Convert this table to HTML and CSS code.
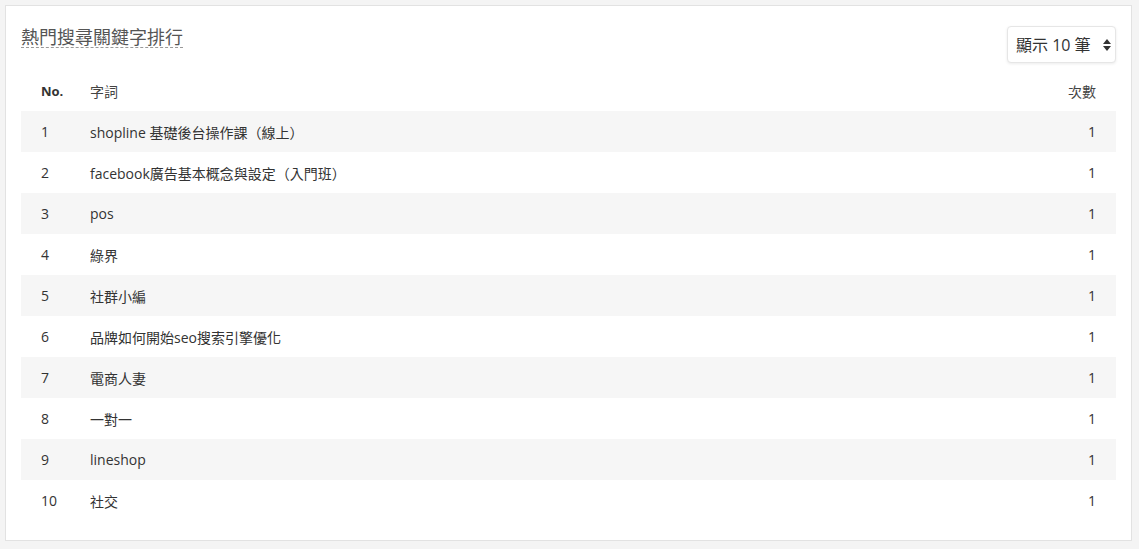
FILE: index.html
```html
<!DOCTYPE html>
<html lang="zh-Hant">
<head>
    <meta charset="UTF-8">
    <title>熱門搜尋關鍵字排行</title>
    <link rel="stylesheet" href="styles.css">
</head>
<body>
<div class="panel">
    <div class="panel-head">
        <h3 class="panel-title">熱門搜尋關鍵字排行</h3>
        <div class="select-wrap">
            <select class="limit-select">
                <option>顯示 10 筆</option>
                <option>顯示 20 筆</option>
            </select>
            <svg class="select-arrow" width="8" height="12" viewBox="0 0 8 12">
                <path d="M4 0 L8 5 L0 5 Z M0 7 L8 7 L4 12 Z" fill="#333"/>
            </svg>
        </div>
    </div>
    <table class="rank-table">
        <thead>
        <tr>
            <th class="col-no">No.</th>
            <th class="th-cjk">字詞</th>
            <th class="th-cjk col-count">次數</th>
        </tr>
        </thead>
        <tbody>
        <tr><td class="col-no">1</td><td>shopline 基礎後台操作課（線上）</td><td class="col-count">1</td></tr>
        <tr><td class="col-no">2</td><td>facebook廣告基本概念與設定（入門班）</td><td class="col-count">1</td></tr>
        <tr><td class="col-no">3</td><td>pos</td><td class="col-count">1</td></tr>
        <tr><td class="col-no">4</td><td>綠界</td><td class="col-count">1</td></tr>
        <tr><td class="col-no">5</td><td>社群小編</td><td class="col-count">1</td></tr>
        <tr><td class="col-no">6</td><td>品牌如何開始seo搜索引擎優化</td><td class="col-count">1</td></tr>
        <tr><td class="col-no">7</td><td>電商人妻</td><td class="col-count">1</td></tr>
        <tr><td class="col-no">8</td><td>一對一</td><td class="col-count">1</td></tr>
        <tr><td class="col-no">9</td><td>lineshop</td><td class="col-count">1</td></tr>
        <tr><td class="col-no">10</td><td>社交</td><td class="col-count">1</td></tr>
        </tbody>
    </table>
</div>
</body>
</html>
```
FILE: styles.css
```css
*{
    margin: 0;
    padding: 0;
    box-sizing: border-box;
}
body{
    background: #f4f4f4;
    font-family: "Open Sans", "Noto Sans CJK TC", sans-serif;
    color: #333;
    padding: 5px 7px 7px 5px;
}
.panel{
    background: #fff;
    border: 1px solid #e2e2e2;
    padding: 20px 15px 19px 15px;
}
.panel-head{
    display: flex;
    justify-content: space-between;
    align-items: flex-start;
    margin-bottom: 7px;
}
.panel-title{
    font-size: 18px;
    font-weight: normal;
    color: #555;
    line-height: 20px;
    margin-top: 1px;
    border-bottom: 1px dashed #999;
}
.select-wrap{
    position: relative;
}
.limit-select{
    appearance: none;
    -webkit-appearance: none;
    width: 109px;
    height: 37px;
    padding: 0 20px 0 8px;
    font-family: "Open Sans", "Noto Sans CJK TC", sans-serif;
    font-size: 16px;
    color: #333;
    background: #fff;
    border: 1px solid #e6e6e6;
    border-radius: 4px;
    box-shadow: 0 1px 3px rgba(0,0,0,0.08);
}
.select-arrow{
    position: absolute;
    right: 5px;
    top: 13px;
    pointer-events: none;
}
.rank-table{
    width: 100%;
    border-collapse: collapse;
    font-size: 14px;
}
.rank-table th,
.rank-table td{
    height: 41px;
    padding: 0 20px;
    text-align: left;
    vertical-align: middle;
}
.rank-table th{
    font-weight: bold;
    font-size: 13px;
    color: #333;
}
.rank-table th.th-cjk{
    font-weight: normal;
    font-size: 14px;
    color: #444;
}
.rank-table .col-no{
    width: 49px;
    padding-right: 0;
}
.rank-table .col-count{
    text-align: right;
}
.rank-table tbody tr:nth-child(odd){
    background: #f6f6f6;
}
```
